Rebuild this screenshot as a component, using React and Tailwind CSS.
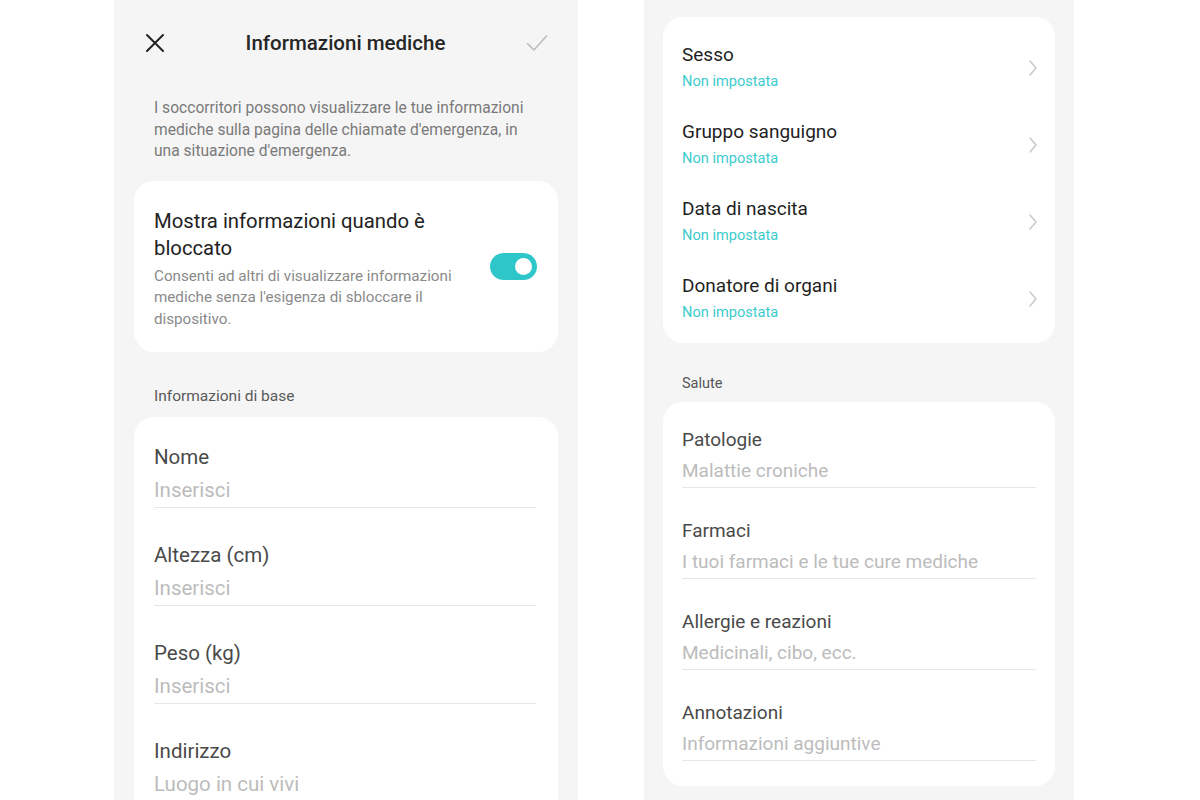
import React from 'react';

const font = { fontFamily: 'Roboto, "Noto Sans", sans-serif' };

const baseFields = [
  { label: 'Nome', hint: 'Inserisci' },
  { label: 'Altezza (cm)', hint: 'Inserisci' },
  { label: 'Peso (kg)', hint: 'Inserisci' },
  { label: 'Indirizzo', hint: 'Luogo in cui vivi' },
];

const pickers = ['Sesso', 'Gruppo sanguigno', 'Data di nascita', 'Donatore di organi'];

const healthFields = [
  { label: 'Patologie', hint: 'Malattie croniche' },
  { label: 'Farmaci', hint: 'I tuoi farmaci e le tue cure mediche' },
  { label: 'Allergie e reazioni', hint: 'Medicinali, cibo, ecc.' },
  { label: 'Annotazioni', hint: 'Informazioni aggiuntive' },
];

function Toggle() {
  return (
    <div className="w-[47px] h-[27px] rounded-full bg-[#2fc6c9] flex items-center justify-end pr-[5px] shrink-0 mb-[4px]">
      <div className="w-[17px] h-[17px] rounded-full bg-white" />
    </div>
  );
}

function Chevron() {
  return (
    <svg width="10" height="18" viewBox="0 0 10 18" fill="none" className="shrink-0">
      <path d="M2 2l6 7-6 7" stroke="#c9c9c9" strokeWidth="1.5" strokeLinecap="round" strokeLinejoin="round" />
    </svg>
  );
}

function LeftPhone() {
  return (
    <div className="w-[464px] h-[800px] bg-[#f5f5f5] overflow-hidden shrink-0">
      {/* Header */}
      <div className="h-[86px] flex items-center justify-between pl-[31px] pr-[30px]">
        <svg width="20" height="20" viewBox="0 0 20 20">
          <path d="M2 2l16 16M18 2L2 18" stroke="#222" strokeWidth="2" strokeLinecap="round" />
        </svg>
        <div className="text-[20.5px] font-medium text-[#262626]">Informazioni mediche</div>
        <svg width="22" height="18" viewBox="0 0 22 18">
          <path d="M1.5 9.5l6.5 6.5L20.5 2" fill="none" stroke="#bdbdbd" strokeWidth="1.6" strokeLinecap="round" strokeLinejoin="round" />
        </svg>
      </div>

      <p className="mt-[12px] px-[40px] text-[15.6px] leading-[21.5px] text-[#7a7a7a]">
        I soccorritori possono visualizzare le tue informazioni mediche sulla pagina delle chiamate d'emergenza, in una situazione d'emergenza.
      </p>

      <div className="mx-[20px] mt-[18px] bg-white rounded-[20px] pl-[20px] pr-[21px] pt-[27px] pb-[22px] flex items-center gap-[20px]">
        <div className="flex-1">
          <div className="text-[20.3px] leading-[27px] text-[#222]">Mostra informazioni quando è bloccato</div>
          <div className="mt-[4px] text-[15.2px] leading-[21.5px] text-[#8a8a8a]">
            Consenti ad altri di visualizzare informazioni mediche senza l'esigenza di sbloccare il dispositivo.
          </div>
        </div>
        <Toggle />
      </div>

      <div className="px-[40px] pt-[34px] pb-[11px] text-[15.5px] leading-[20px] text-[#5a5a5a]">Informazioni di base</div>

      <div className="mx-[20px] bg-white rounded-[20px] pl-[20px] pr-[22px] pt-[24px] pb-[24px] flex flex-col gap-[31px]">
        {baseFields.map((f) => (
          <div key={f.label} className="border-b border-[#e6e6e6]">
            <div className="text-[20.5px] leading-[33px] text-[#4a4a4a]">{f.label}</div>
            <div className="text-[20.5px] leading-[33px] text-[#bcbcbc]">{f.hint}</div>
          </div>
        ))}
      </div>
    </div>
  );
}

function RightPhone() {
  return (
    <div className="w-[430px] h-[800px] bg-[#f5f5f5] overflow-hidden shrink-0 px-[19px] pt-[17px]">
      <div className="bg-white rounded-[20px] pt-[12px] pb-[6px] pl-[19px] pr-[17px]">
        {pickers.map((p) => (
          <div key={p} className="h-[77px] flex items-center justify-between">
            <div>
              <div className="text-[19px] leading-[26px] text-[#1f1f1f]">{p}</div>
              <div className="text-[14.6px] leading-[26px] text-[#3ccbcd]">Non impostata</div>
            </div>
            <Chevron />
          </div>
        ))}
      </div>

      <div className="px-[19px] pt-[32px] pb-[9px] text-[14.5px] leading-[18px] text-[#555]">Salute</div>

      <div className="bg-white rounded-[20px] px-[19px] pt-[23px] pb-[25px] flex flex-col gap-[28px]">
        {healthFields.map((f) => (
          <div key={f.label} className="border-b border-[#e6e6e6]">
            <div className="text-[19px] leading-[30px] text-[#4a4a4a]">{f.label}</div>
            <div className="text-[19px] leading-[32px] text-[#bcbcbc]">{f.hint}</div>
          </div>
        ))}
      </div>
    </div>
  );
}

export default function App() {
  return (
    <div className="w-[1200px] h-[800px] bg-white flex overflow-hidden" style={font}>
      <div className="w-[114px] shrink-0" />
      <LeftPhone />
      <div className="w-[66px] shrink-0" />
      <RightPhone />
    </div>
  );
}
